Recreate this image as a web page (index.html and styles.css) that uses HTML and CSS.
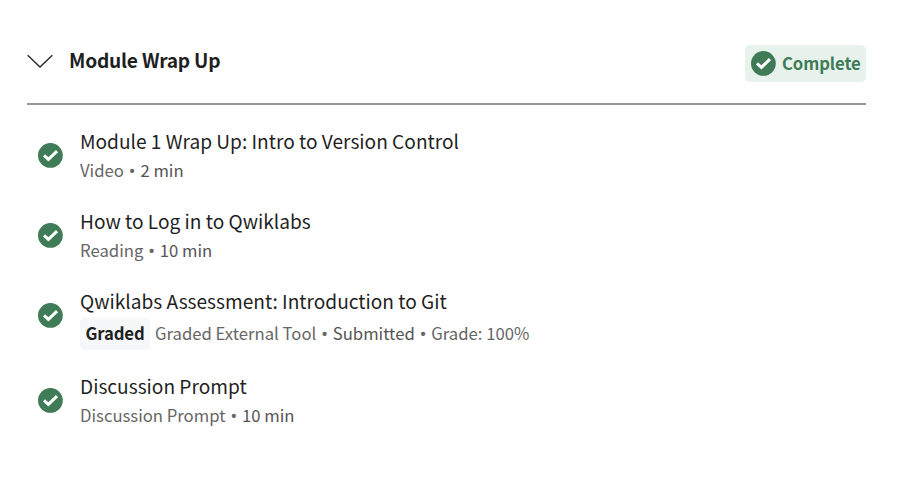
FILE: index.html
```html
<!DOCTYPE html>
<html lang="en">
<head>
<meta charset="utf-8">
<title>Module Wrap Up</title>
<link rel="stylesheet" href="styles.css">
</head>
<body>
<svg width="0" height="0" class="defs"><symbol id="check" viewBox="0 0 26 26"><circle cx="13.4" cy="13.4" r="12.4" fill="#3f7b57"/><path d="M7 13.4 11.4 17.4 20 9.2" fill="none" stroke="#fff" stroke-width="3"/></symbol></svg>
<main class="module">
  <header class="module-header">
    <svg class="chevron" viewBox="0 0 26 14"><path d="M.7 1.2 13 13.1 25.3 1.2" fill="none" stroke="#2b2b2b" stroke-width="1.4"/></svg>
    <h1 class="module-title">Module Wrap Up</h1>
    <div class="status"><svg class="check"><use href="#check"/></svg><span>Complete</span></div>
  </header>
  <ul class="items">
    <li class="item"><svg class="check"><use href="#check"/></svg><div class="body"><div class="title">Module 1 Wrap Up: Intro to Version Control</div><div class="meta"><span>Video</span><i>•</i><span class="dark">2 min</span></div></div></li>
    <li class="item"><svg class="check"><use href="#check"/></svg><div class="body"><div class="title">How to Log in to Qwiklabs</div><div class="meta"><span>Reading</span><i>•</i><span class="dark">10 min</span></div></div></li>
    <li class="item graded"><svg class="check"><use href="#check"/></svg><div class="body"><div class="title">Qwiklabs Assessment: Introduction to Git</div><div class="meta"><b class="tag">Graded</b><span>Graded External Tool</span><i>•</i><span class="dark">Submitted</span><i>•</i><span>Grade: 100%</span></div></div></li>
    <li class="item"><svg class="check"><use href="#check"/></svg><div class="body"><div class="title">Discussion Prompt</div><div class="meta"><span>Discussion Prompt</span><i>•</i><span class="dark">10 min</span></div></div></li>
  </ul>
</main>
</body>
</html>
```
FILE: styles.css
```css
* { box-sizing: border-box; }
body { margin: 0; background: #fff; color: #1f1f1f; font-family: "Noto Sans CJK SC", "Noto Sans", sans-serif; }
.defs { display: block; }
.module { padding: 45px 32px 0 27px; }
.module-header { display: flex; align-items: flex-start; height: 60px; border-bottom: 2px solid #939598; }
.chevron { width: 26px; height: 14px; margin: 9px 16px 0 0; flex: none; }
.module-title { margin: 0; flex: 1; font-size: 19.2px; line-height: 30px; font-weight: 700; letter-spacing: -.23px; }
.status { display: flex; align-items: center; gap: 6px; width: 121px; height: 37px; padding-left: 5px; border-radius: 5px; background: #e8f2ec; color: #3f7b57; font-size: 16.7px; line-height: 34px; font-weight: 700; letter-spacing: -.1px; white-space: nowrap; }
.status span { margin-top: -2px; }
.check { width: 26px; height: 26px; flex: none; overflow: visible; }
.status .check { margin-top: -1px; }
.items { list-style: none; margin: 0; padding: 23px 0 0 10px; }
.item { display: flex; height: 80px; gap: 17px; }
.item > .check { margin-top: 14px; }
.title { height: 28px; line-height: 26px; font-size: 19.12px; white-space: nowrap; }
.meta { display: flex; align-items: center; height: 30px; line-height: 28px; font-size: 16.7px; color: #666; white-space: nowrap; }
.meta > span { height: 30px; }
.meta i { display: flex; justify-content: center; font-family: "Open Sans", sans-serif; font-style: normal; font-size: 19px; width: 16.5px; }
.dark { color: #555; }
.graded { height: 85px; }
.graded .meta { height: 32px; margin-top: 2px; }
.tag { width: 70px; height: 32px; margin-right: 5px; text-align: center; line-height: 30px; border-radius: 5px; background: #f5f7f8; color: #1f1f1f; letter-spacing: -.1px; }
```
